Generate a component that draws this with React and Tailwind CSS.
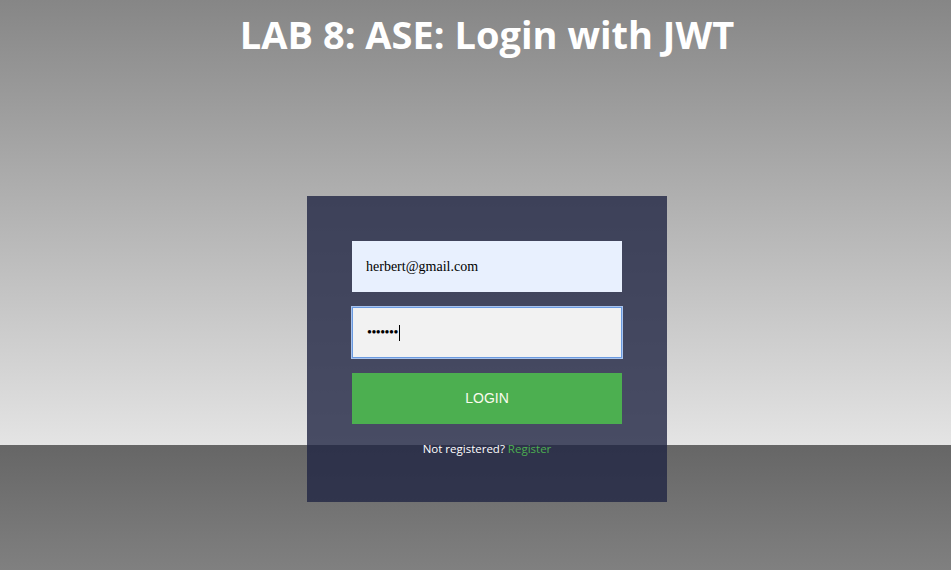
import React from 'react';

const App = () => {
    return (
        <div className="min-h-[570px] w-full bg-[linear-gradient(to_bottom,#868686_0px,#e4e4e4_445px,#666666_445px,#808080_570px)] pl-[23px] font-['Open_Sans',sans-serif]">
            {/* Heading */}
            <h1 className="pt-[8px] text-center text-[38px] font-bold leading-[52px] text-white">
                LAB 8: ASE: Login with JWT
            </h1>

            {/* Login card */}
            <div className="mx-auto mt-[136px] w-[360px] bg-[rgba(32,38,68,0.8)] px-[45px] pt-[45px] pb-[44px]">
                <form className="flex flex-col gap-[15px]" onSubmit={(e) => e.preventDefault()}>
                    <div className="flex h-[51px] items-center bg-[#e8f0fe] px-[14px] font-['Liberation_Serif',serif] text-[14px] text-black">
                        herbert@gmail.com
                    </div>
                    <div className="flex h-[51px] items-center border border-[#6a9ae0] bg-[#f2f2f2] px-[14px] font-['Liberation_Serif',serif] text-[14px] text-black outline outline-1 outline-[#a9c4ee]">
                        <span className="tracking-[-0.5px]">•••••••</span>
                        <span className="ml-px h-[16px] w-px bg-black" />
                    </div>
                    <button
                        type="submit"
                        className="h-[51px] w-full bg-[#4caf50] font-['Liberation_Sans',sans-serif] text-[14px] uppercase text-[#fbfbee]"
                    >
                        Login
                    </button>
                </form>
                <p className="mt-[16px] text-center text-[11.5px] leading-[18px] text-white">
                    Not registered? <a href="#" className="text-[#4caf50]">Register</a>
                </p>
            </div>
        </div>
    );
};

export default App;
